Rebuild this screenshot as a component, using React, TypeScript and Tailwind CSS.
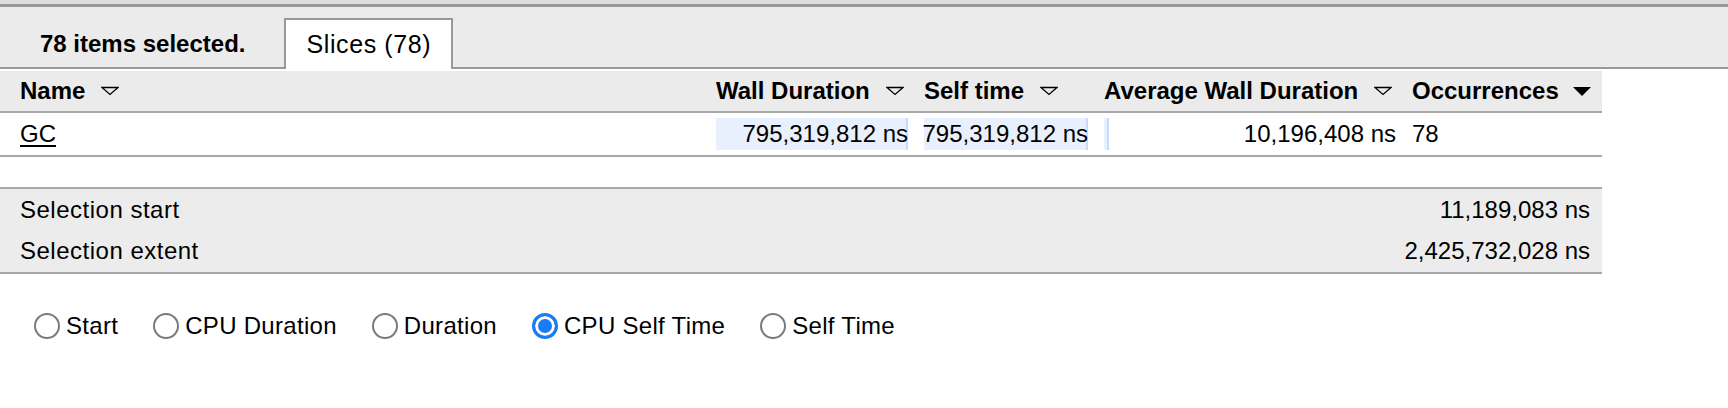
import React from "react";

type Row = {
  name: string;
  wall: number;
  self: number;
  avg: number;
  count: number;
};

const rows: Row[] = [
  { name: "GC", wall: 795319812, self: 795319812, avg: 10196408, count: 78 },
];

const fmt = (n: number) => n.toLocaleString("en-US") + " ns";

const SortArrow = ({ filled }: { filled?: boolean }) =>
  filled ? (
    <svg width="20" height="11" viewBox="0 0 20 11" className="ml-[13px]">
      <polygon points="1,1 19,1 10,10" fill="#000" />
    </svg>
  ) : (
    <svg width="18" height="10" viewBox="0 0 18 10" className="ml-4">
      <polygon points="1,1.5 17,1.5 9,8.5" fill="none" stroke="#000" strokeWidth="1.3" />
    </svg>
  );

// cell with a light blue bar behind the value, width relative to the column max
const BarCell = ({ value, max }: { value: number; max: number }) => (
  <div className="px-2 py-[5px]">
    <div className="relative flex h-[32px] items-center justify-end whitespace-nowrap">
      <div
        className="absolute inset-y-0 left-0 bg-[#e8f0fe] border-r-2 border-[#c6dafc]"
        style={{ width: `${Math.max((value / max) * 100, 1.7)}%` }}
      />
      <span className="relative">{fmt(value)}</span>
    </div>
  </div>
);

const Header = ({ label, filled }: { label: string; filled?: boolean }) => (
  <div className="flex items-center whitespace-nowrap px-2 font-bold">
    <span>{label}</span>
    <SortArrow filled={filled} />
  </div>
);

const radios = ["Start", "CPU Duration", "Duration", "CPU Self Time", "Self Time"];

export default function App() {
  const maxWall = Math.max(...rows.map((r) => r.wall));

  return (
    <div className="min-h-[408px] w-[1728px] bg-white font-['Liberation_Sans',Arial,sans-serif] text-[24px] text-black">
      <div className="h-[4px] bg-[#dedede]" />
      <div className="h-[3px] bg-[#999]" />

      {/* tab strip */}
      <div className="flex h-[62px] items-end border-b-2 border-[#999] bg-[#ebebeb] pl-[40px]">
        <div className="mb-[-2px] flex h-[51px] items-center font-bold">78 items selected.</div>
        <div className="ml-[39px] mb-[-2px] flex h-[51px] items-center border-2 border-b-0 border-[#999] bg-white px-[20px] text-[25px] tracking-[0.6px]">
          Slices (78)
        </div>
      </div>

      <div className="mt-[2px] w-[1602px]">
        <div className="grid h-[42px] grid-cols-[708px_208px_180px_308px_198px] border-b-2 border-[#a8a8a8] bg-[#ebebeb]">
          <div className="flex items-center pl-[20px] font-bold">
            <span>Name</span>
            <SortArrow />
          </div>
          <Header label="Wall Duration" />
          <Header label="Self time" />
          <Header label="Average Wall Duration" />
          <Header label="Occurrences" filled />
        </div>

        {rows.map((r) => (
          <div
            key={r.name}
            className="grid h-[44px] grid-cols-[708px_208px_180px_308px_198px] border-b-2 border-[#a8a8a8]"
          >
            <div className="flex items-center pl-[20px]">
              <span className="underline underline-offset-[3px]">{r.name}</span>
            </div>
            <BarCell value={r.wall} max={maxWall} />
            <BarCell value={r.self} max={maxWall} />
            <BarCell value={r.avg} max={maxWall} />
            <div className="flex items-center px-2">{r.count}</div>
          </div>
        ))}

        <div className="h-[32px] border-b-2 border-[#a8a8a8]" />

        <div className="border-b-2 border-[#a8a8a8] bg-[#ececec] pb-[1px] pl-[20px] pr-[12px] pt-[1px]">
          <div className="flex h-[40px] items-center justify-between">
            <span className="tracking-[0.5px]">Selection start</span>
            <span>11,189,083 ns</span>
          </div>
          <div className="flex h-[41px] items-center justify-between">
            <span className="tracking-[0.5px]">Selection extent</span>
            <span>2,425,732,028 ns</span>
          </div>
        </div>
      </div>

      <div className="mt-[32px] flex h-[40px] items-center pl-[34px]">
        {radios.map((label) => (
          <label key={label} className="mr-[35px] flex items-center">
            <input
              type="radio"
              name="sort"
              defaultChecked={label === "CPU Self Time"}
              className="h-[26px] w-[26px] appearance-none rounded-full border-2 border-[#7a7a7a] bg-white checked:border-[3px] checked:border-[#1a7cf5] checked:bg-[#1a7cf5] checked:shadow-[inset_0_0_0_3px_white]"
            />
            <span className="ml-[6px] tracking-[0.3px]">{label}</span>
          </label>
        ))}
      </div>
    </div>
  );
}
